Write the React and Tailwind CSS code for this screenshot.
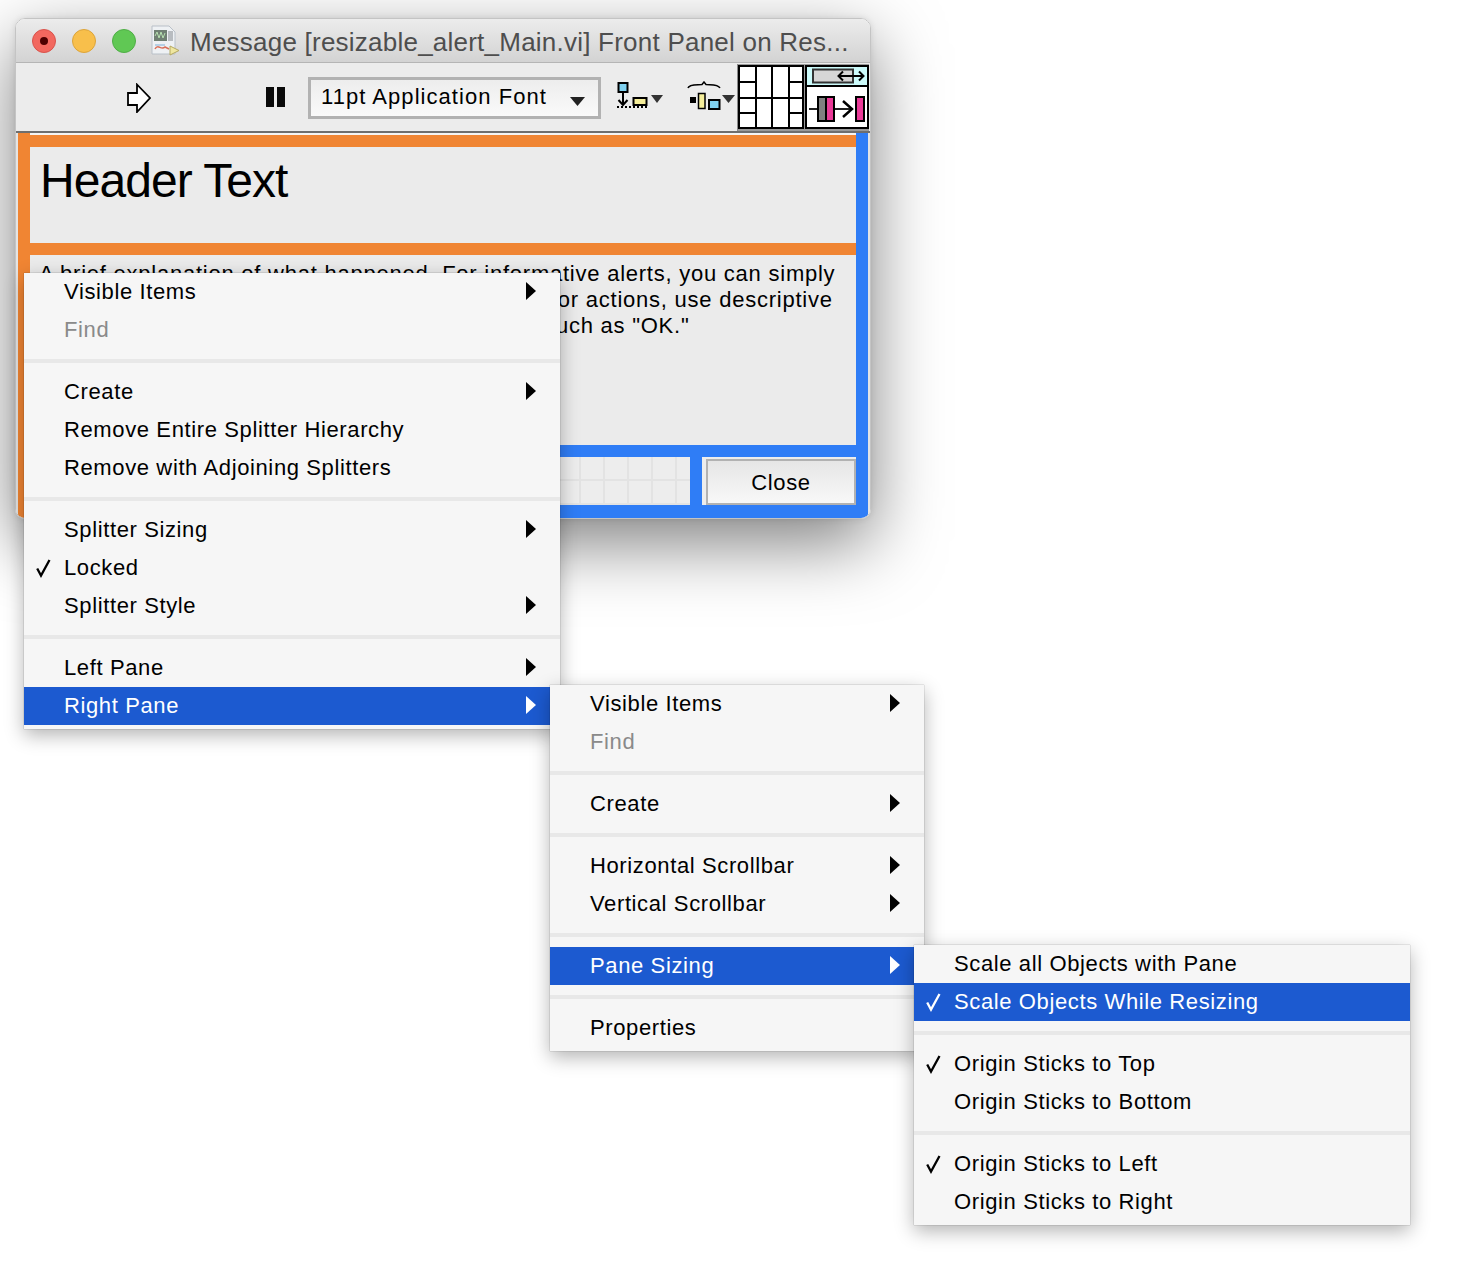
import React from "react";

const FONT = "font-['Liberation_Sans',Arial,sans-serif]";

const mainMenu = [
  [{ label: "Visible Items", sub: true }, { label: "Find", disabled: true }],
  [
    { label: "Create", sub: true },
    { label: "Remove Entire Splitter Hierarchy" },
    { label: "Remove with Adjoining Splitters" },
  ],
  [
    { label: "Splitter Sizing", sub: true },
    { label: "Locked", checked: true },
    { label: "Splitter Style", sub: true },
  ],
  [{ label: "Left Pane", sub: true }, { label: "Right Pane", sub: true, active: true }],
];

const paneMenu = [
  [{ label: "Visible Items", sub: true }, { label: "Find", disabled: true }],
  [{ label: "Create", sub: true }],
  [{ label: "Horizontal Scrollbar", sub: true }, { label: "Vertical Scrollbar", sub: true }],
  [{ label: "Pane Sizing", sub: true, active: true }],
  [{ label: "Properties" }],
];

const sizingMenu = [
  [
    { label: "Scale all Objects with Pane" },
    { label: "Scale Objects While Resizing", checked: true, active: true },
  ],
  [{ label: "Origin Sticks to Top", checked: true }, { label: "Origin Sticks to Bottom" }],
  [{ label: "Origin Sticks to Left", checked: true }, { label: "Origin Sticks to Right" }],
];

function Check({ white }) {
  const c = white ? "#ffffff" : "#000000";
  return (
    <svg width="16" height="20" viewBox="0 0 16 20" className="absolute left-[12px] top-[10px]">
      <path d="M1.2 9.5 L5 16.5 L13.5 1" fill="none" stroke={c} strokeWidth="2.3" />
    </svg>
  );
}

function SubArrow({ white }) {
  return (
    <svg width="12" height="20" viewBox="0 0 12 20" className="absolute right-[23px] top-[9px]">
      <path d="M1 0 L11 9 L1 18 Z" fill={white ? "#ffffff" : "#000000"} />
    </svg>
  );
}

function MenuRow({ item }) {
  const color = item.active ? "bg-[#1c5ad0] text-white" : item.disabled ? "text-[#8a8a8a]" : "text-black";
  return (
    <div className={`relative flex h-[38px] items-center pb-[1px] pl-[40px] ${color}`}>
      {item.checked && <Check white={item.active} />}
      {item.label}
      {item.sub && <SubArrow white={item.active} />}
    </div>
  );
}

function Menu({ groups, className }) {
  return (
    <div
      className={`absolute bg-[#f6f6f6] pb-[4px] text-[22px] leading-[26px] tracking-[0.62px] shadow-[0_0_1px_rgba(0,0,0,0.45),0_6px_18px_rgba(0,0,0,0.3)] ${className}`}
    >
      {groups.map((group, i) => (
        <div key={i}>
          {i > 0 && (
            <div className="flex h-[24px] items-center">
              <div className="h-[4px] w-full bg-[#e8e8e8]" />
            </div>
          )}
          {group.map((item) => (
            <MenuRow key={item.label} item={item} />
          ))}
        </div>
      ))}
    </div>
  );
}

function ViIcon() {
  return (
    <svg width="30" height="32" viewBox="0 0 30 32" className="ml-[15px] shrink-0">
      <path d="M1 1 H18 L24 7 V29 H1 Z" fill="#eef1f4" stroke="#b9c0c8" />
      <rect x="3" y="5" width="13" height="11" fill="#6f7f72" />
      <path d="M4 11 L6 7 L8 13 L10 7 L12 13 L14 8" fill="none" stroke="#b6e0b0" strokeWidth="1" />
      <rect x="17" y="6" width="5" height="10" fill="#b8bcc0" />
      <path d="M4 24 C7 18 10 26 14 22 L18 24" fill="none" stroke="#d8705a" strokeWidth="1.5" />
      <path d="M4 20 H14" stroke="#7fb0d8" />
      <path d="M19 21 L28 25.5 L19 30 Z" fill="#efe7a0" stroke="#b5a860" />
    </svg>
  );
}

function RunArrow() {
  return (
    <svg width="26" height="30" viewBox="0 0 26 30" className="ml-[110px] mt-[2px] shrink-0">
      <path d="M11 1.5 L24 15 L11 29 V22 H2 V10 H11 Z" fill="#ffffff" stroke="#000000" strokeWidth="1.8" />
    </svg>
  );
}

function Pause() {
  return (
    <div className="ml-[114px] flex shrink-0 gap-[3px]">
      <div className="h-[20px] w-[8px] bg-[#0a0a0a]" />
      <div className="h-[20px] w-[8px] bg-[#0a0a0a]" />
    </div>
  );
}

function DownTri({ className }) {
  return (
    <svg width="15" height="9" viewBox="0 0 15 9" className={className}>
      <path d="M0 0 H15 L7.5 9 Z" fill="#222222" />
    </svg>
  );
}

function OrderIcon() {
  return (
    <svg width="50" height="32" viewBox="0 0 50 32" className="ml-[16px] shrink-0">
      <rect x="1.5" y="2" width="9" height="9" fill="#7fd0ee" stroke="#000" strokeWidth="2" />
      <path d="M6 12 V24 M1.5 19 L6 24 L10.5 19" fill="none" stroke="#000" strokeWidth="2" />
      <path d="M0 26 H30" stroke="#000" strokeWidth="2" strokeDasharray="2 2" />
      <rect x="16.5" y="17" width="13" height="7" fill="#f5ee9a" stroke="#000" strokeWidth="2" />
      <path d="M34 14 H46 L40 22 Z" fill="#333" />
    </svg>
  );
}

function AlignIcon() {
  return (
    <svg width="50" height="32" viewBox="0 0 50 32" className="ml-[20px] shrink-0">
      <path d="M1 7 C2 3 10 4 15 3.5 L17 1 L19 3.5 C24 4 31 3 33 7" fill="none" stroke="#000" strokeWidth="1.5" />
      <rect x="3" y="16" width="6" height="6" fill="#000" />
      <rect x="11.5" y="12.5" width="6.5" height="15" fill="#f5ee9a" stroke="#000" strokeWidth="1.5" />
      <rect x="22" y="19" width="10.5" height="9" fill="#7fd0ee" stroke="#000" strokeWidth="2" />
      <path d="M35 14 H48 L41.5 22 Z" fill="#333" />
    </svg>
  );
}

function GridGlyph() {
  return (
    <svg width="66" height="64" viewBox="0 0 66 64" className="shrink-0 bg-white">
      <path
        d="M1 0 V64 M18 0 V64 M34 0 V64 M51 0 V64 M65 0 V64 M0 1 H66 M0 33 H66 M0 63 H66 M0 17 H18 M51 17 H66 M0 48 H18 M51 48 H66"
        fill="none"
        stroke="#000"
        strokeWidth="2"
      />
    </svg>
  );
}

function SplitterGlyph() {
  return (
    <svg width="64" height="64" viewBox="0 0 64 64" className="ml-[1px] shrink-0 bg-white">
      <rect x="0" y="0" width="64" height="20" fill="#ccfbfb" />
      <rect x="8" y="4.5" width="40" height="13" fill="#d6d6d6" stroke="#333" strokeWidth="2" />
      <path d="M34 11 H58 M38 6.5 L33.5 11 L38 15.5 M54 6.5 L58.5 11 L54 15.5" fill="none" stroke="#000" strokeWidth="2" />
      <path d="M0 21 H64" stroke="#000" strokeWidth="2" />
      <rect x="1" y="1" width="62" height="62" fill="none" stroke="#000" strokeWidth="2" />
      <path d="M4 44 H47" stroke="#222" strokeWidth="2" />
      <rect x="13" y="32" width="8" height="24" fill="#808080" stroke="#000" strokeWidth="2" />
      <rect x="21" y="32" width="8" height="24" fill="#ea3a98" stroke="#000" strokeWidth="2" />
      <path d="M38 36 L47 44 L38 52" fill="none" stroke="#000" strokeWidth="2.5" />
      <rect x="51" y="32" width="8" height="24" fill="#ea3a98" stroke="#000" strokeWidth="2" />
    </svg>
  );
}

function Toolbar() {
  return (
    <div className="flex h-[70px] shrink-0 items-center border-b-[2px] border-[#6e6e6e] bg-[#ececec]">
      <RunArrow />
      <Pause />
      <div className="ml-[23px] mt-[2px] flex h-[42px] w-[293px] shrink-0 items-center justify-between border-[3px] border-[#b2b2b2] bg-gradient-to-b from-[#ededed] to-[#fafafa] pl-[10px] pr-[13px] text-[22px] tracking-[1.05px] text-black">
        <span className="pb-[3px]">11pt Application Font</span>
        <DownTri className="mt-[7px]" />
      </div>
      <OrderIcon />
      <AlignIcon />
      <div className="ml-auto mr-[2px] flex h-[67px] shrink-0 items-center border-l-[1px] border-[#8a8a8a] bg-[#9a9a9a]">
        <GridGlyph />
        <SplitterGlyph />
      </div>
    </div>
  );
}

function Panel() {
  return (
    <div className="flex flex-1 bg-[#e4e4e4] pl-[2px] pr-[1px]">
      <div className="w-[12px] shrink-0 bg-[#f08533]" />
      <div className="flex w-[826px] shrink-0 flex-col">
        <div className="h-[2px] bg-[#f4f4f4]" />
        <div className="h-[12px] bg-[#f08533]" />
        <div className="h-[96px] bg-[#ebebeb] pl-[10px] pt-[6px] text-[48px] leading-[56px] tracking-[-0.95px] text-black">
          Header Text
        </div>
        <div className="h-[12px] bg-[#f08533]" />
        <div className="h-[190px] whitespace-nowrap bg-[#ebebeb] pl-[9px] pt-[6px] text-[22px] leading-[26px] tracking-[0.76px] text-black">
          <div>A brief explanation of what happened. For informative alerts, you can simply</div>
          <div>state the fact of an event that occurred. For error or actions, use descriptive</div>
          <div>button labels in place of the more generic texts, such as "OK."</div>
        </div>
        <div className="h-[12px] bg-[#2f7df6]" />
        <div className="flex h-[48px]">
          <div className="w-[660px] bg-[#ededed] bg-[linear-gradient(#e3e3e3_2px,transparent_2px),linear-gradient(90deg,#e3e3e3_2px,transparent_2px)] bg-[size:24px_24px] bg-[position:-3px_-2px]" />
          <div className="w-[12px] bg-[#2f7df6]" />
          <div className="flex flex-1 bg-[#ededed] pl-[4px] pt-[2px]">
            <div className="flex flex-1 items-center justify-center border-[2px] border-[#b2b2b2] bg-gradient-to-b from-[#e6e6e6] to-[#f8f8f8] pt-[1px] text-[22px] tracking-[0.62px] text-black">
              Close
            </div>
          </div>
        </div>
        <div className="h-[13px] bg-[#2f7df6]" />
      </div>
      <div className="w-[12px] shrink-0 bg-[#2f7df6]" />
    </div>
  );
}

export default function App() {
  return (
    <div className={`relative h-[1279px] w-[1465px] overflow-hidden bg-white pl-[15px] pt-[18px] ${FONT}`}>
      <div className="flex h-[501px] w-[856px] flex-col overflow-hidden rounded-[10px] border border-[#c4c4c4] shadow-[0_24px_70px_rgba(0,0,0,0.5),0_0_6px_rgba(0,0,0,0.1)]">
        <div className="flex h-[44px] shrink-0 items-center border-b border-[#b5b5b5] bg-gradient-to-b from-[#ececec] to-[#d3d3d3] pl-[16px]">
          <div className="flex h-[24px] w-[24px] shrink-0 items-center justify-center rounded-full border border-[#d9534c] bg-[#f2685f]">
            <div className="h-[8px] w-[8px] rounded-full bg-[#4d0000]" />
          </div>
          <div className="ml-[16px] h-[24px] w-[24px] shrink-0 rounded-full border border-[#dca43a] bg-[#f8bf4b]" />
          <div className="ml-[16px] h-[24px] w-[24px] shrink-0 rounded-full border border-[#4fae46] bg-[#60c854]" />
          <ViIcon />
          <div className="ml-[9px] whitespace-nowrap pt-[3px] text-[26px] tracking-[0.23px] text-[#4e4e4e]">
            Message [resizable_alert_Main.vi] Front Panel on Res...
          </div>
        </div>
        <Toolbar />
        <Panel />
      </div>

      <Menu groups={mainMenu} className="left-[24px] top-[273px] w-[536px]" />
      <Menu groups={paneMenu} className="left-[550px] top-[685px] w-[374px]" />
      <Menu groups={sizingMenu} className="left-[914px] top-[945px] w-[496px]" />
    </div>
  );
}
